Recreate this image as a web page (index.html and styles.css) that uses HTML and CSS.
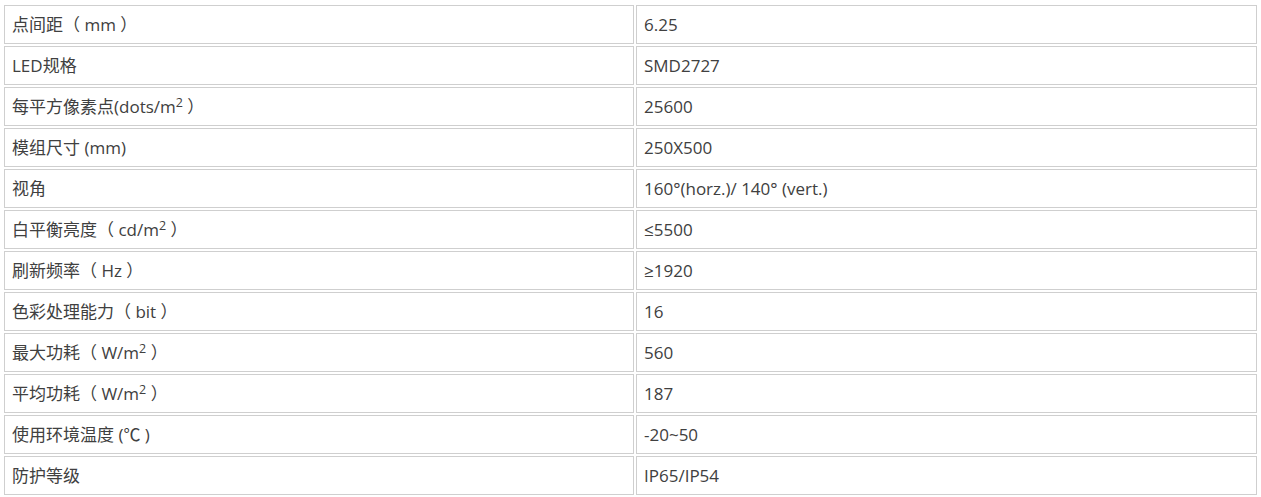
FILE: index.html
```html
<!DOCTYPE html>
<html lang="zh">
<head>
<meta charset="utf-8">
<title>参数</title>
<link rel="stylesheet" href="styles.css">
</head>
<body>
<table class="spec">
  <colgroup><col class="c1"><col class="c2"></colgroup>
  <tbody>
    <tr><td>点间距（ mm ）</td><td>6.25</td></tr>
    <tr><td>LED规格</td><td>SMD2727</td></tr>
    <tr><td>每平方像素点(dots/m<sup>2</sup> ）</td><td>25600</td></tr>
    <tr><td>模组尺寸 (mm)</td><td>250X500</td></tr>
    <tr><td>视角</td><td>160°(horz.)/ 140° (vert.)</td></tr>
    <tr><td>白平衡亮度（ cd/m<sup>2</sup> ）</td><td>≤5500</td></tr>
    <tr><td>刷新频率（ Hz ）</td><td>≥1920</td></tr>
    <tr><td>色彩处理能力（ bit ）</td><td>16</td></tr>
    <tr><td>最大功耗（ W/m<sup>2</sup> ）</td><td>560</td></tr>
    <tr><td>平均功耗（ W/m<sup>2</sup> ）</td><td>187</td></tr>
    <tr><td>使用环境温度 (℃ )</td><td>-20~50</td></tr>
    <tr><td>防护等级</td><td>IP65/IP54</td></tr>
  </tbody>
</table>
</body>
</html>
```
FILE: styles.css
```css
html, body {
  margin: 0;
  padding: 0;
  background: #ffffff;
}
body {
  font-family: "Open Sans", "Noto Sans CJK SC", sans-serif;
  font-size: 17px;
  color: #404040;
}
.spec {
  border-collapse: separate;
  border-spacing: 2px;
  table-layout: fixed;
  width: 1257px;
  margin: 3px 0 0 2px;
}
.spec .c1 { width: 630px; }
.spec .c2 { width: 621px; }
.spec td {
  box-sizing: border-box;
  height: 39px;
  border: 1px solid #cfcfcf;
  padding: 0 7px;
  vertical-align: middle;
  line-height: 20px;
  white-space: nowrap;
}
.spec sup {
  font-size: 12.5px;
  line-height: 0;
  vertical-align: 6px;
}
```
